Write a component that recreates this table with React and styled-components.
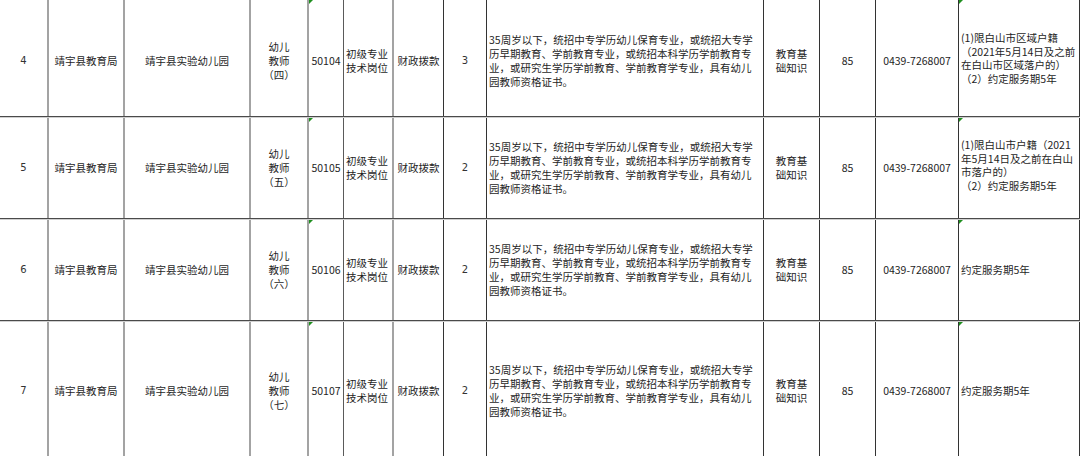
import React from 'react';
import styled, { createGlobalStyle } from 'styled-components';

const GlobalStyle = createGlobalStyle`
  html, body {
    margin: 0;
    padding: 0;
    background: #fff;
  }
  body {
    width: 1080px;
    height: 456px;
    overflow: hidden;
    font-family: "Noto Sans CJK SC", "Noto Sans", sans-serif;
    color: #1e1e1e;
  }
`;

const columns = [
  { w: 49, line: 'grey', align: 'center' },
  { w: 76, line: 'grey', align: 'center' },
  { w: 126, line: 'grey', align: 'center' },
  { w: 58, line: 'grey', align: 'center' },
  { w: 35, line: 'mid', align: 'center', mark: true },
  { w: 50, line: 'grey', align: 'left' },
  { w: 50, line: 'dark', align: 'center' },
  { w: 43, line: 'dark', align: 'center' },
  { w: 277, line: 'dark', align: 'left' },
  { w: 56, line: 'dark', align: 'center' },
  { w: 56, line: 'dark', align: 'center' },
  { w: 83, line: 'dark', align: 'center' },
  { w: 121, line: 'dark', align: 'left', mark: true },
];

const lineStyles = {
  grey: '2px solid #a3a3a3',
  mid: '1px solid #5a5a5a',
  dark: '1px solid #333',
};

const desc = [
  '35周岁以下，统招中专学历幼儿保育专业，或统招大专学',
  '历早期教育、学前教育专业，或统招本科学历学前教育专',
  '业，或研究生学历学前教育、学前教育学专业，具有幼儿',
  '园教师资格证书。',
];

const rows = [
  {
    no: '4', title: '（四）', code: '50104', count: '3', height: 117, pad: 6,
    note: ['(1)限白山市区域户籍', '（2021年5月14日及之前', '在白山市区域落户的）', '（2）约定服务期5年'],
  },
  {
    no: '5', title: '（五）', code: '50105', count: '2', height: 102, pad: 0,
    note: ['(1)限白山市户籍（2021', '年5月14日及之前在白山', '市落户的）', '（2）约定服务期5年'],
  },
  { no: '6', title: '（六）', code: '50106', count: '2', height: 102, pad: 0, note: ['约定服务期5年'] },
  { no: '7', title: '（七）', code: '50107', count: '2', height: 140, pad: 0, note: ['约定服务期5年'] },
];

const Sheet = styled.div`
  width: 1080px;
  display: flex;
  flex-direction: column;
`;

const Row = styled.div`
  display: grid;
  grid-template-columns: ${columns.map((c) => `${c.w}px`).join(' ')};
  height: ${(p) => p.$h}px;
  box-sizing: border-box;
  border-bottom: 1px solid #4a4a4a;

  & + & {
    border-top: 1px solid #d0d0d0;
  }
`;

const Cell = styled.div`
  position: relative;
  box-sizing: border-box;
  display: flex;
  align-items: center;
  justify-content: ${(p) => (p.$align === 'left' ? 'flex-start' : 'center')};
  text-align: ${(p) => p.$align};
  padding: ${(p) => p.$pad}px ${(p) => (p.$align === 'left' ? '2px' : '1px')} 0;
  border-right: ${(p) => lineStyles[p.$line]};
  font-size: 10.5px;
  line-height: 14px;
  white-space: nowrap;

  ${(p) =>
    p.$mark &&
    `
    &::before {
      content: '';
      position: absolute;
      top: 0;
      left: 0;
      border-top: 4px solid #1f8f1f;
      border-right: 4px solid transparent;
    }
  `}
`;

const Lines = styled.div`
  display: flex;
  flex-direction: column;
  align-items: ${(p) => (p.$center ? 'center' : 'flex-start')};
`;

const Note = styled(Lines)`
  margin-top: -6px;
  line-height: 13.5px;
`;

const Num = styled.span`
  font-family: "DejaVu Sans", "Noto Sans", sans-serif;
  font-size: 10px;
  color: #333;
`;

function renderRow(r) {
  const content = [
    <Num>{r.no}</Num>,
    '靖宇县教育局',
    '靖宇县实验幼儿园',
    <Lines $center>
      <span>幼儿</span>
      <span>教师</span>
      <span>{r.title}</span>
    </Lines>,
    r.code,
    <Lines>
      <span>初级专业</span>
      <span>技术岗位</span>
    </Lines>,
    '财政拨款',
    <Num>{r.count}</Num>,
    <Lines>
      {desc.map((d) => (
        <span key={d}>{d}</span>
      ))}
    </Lines>,
    <Lines>
      <span>教育基</span>
      <span>础知识</span>
    </Lines>,
    '85',
    '0439-7268007',
    r.note.length > 1 ? (
      <Note>
        {r.note.map((n) => (
          <span key={n}>{n}</span>
        ))}
      </Note>
    ) : (
      <Lines>
        <span>{r.note[0]}</span>
      </Lines>
    ),
  ];

  return (
    <Row key={r.no} $h={r.height}>
      {columns.map((c, i) => (
        <Cell key={i} $align={c.align} $line={c.line} $mark={c.mark} $pad={r.pad}>
          {content[i]}
        </Cell>
      ))}
    </Row>
  );
}

export default function App() {
  return (
    <>
      <GlobalStyle />
      <Sheet>{rows.map(renderRow)}</Sheet>
    </>
  );
}
